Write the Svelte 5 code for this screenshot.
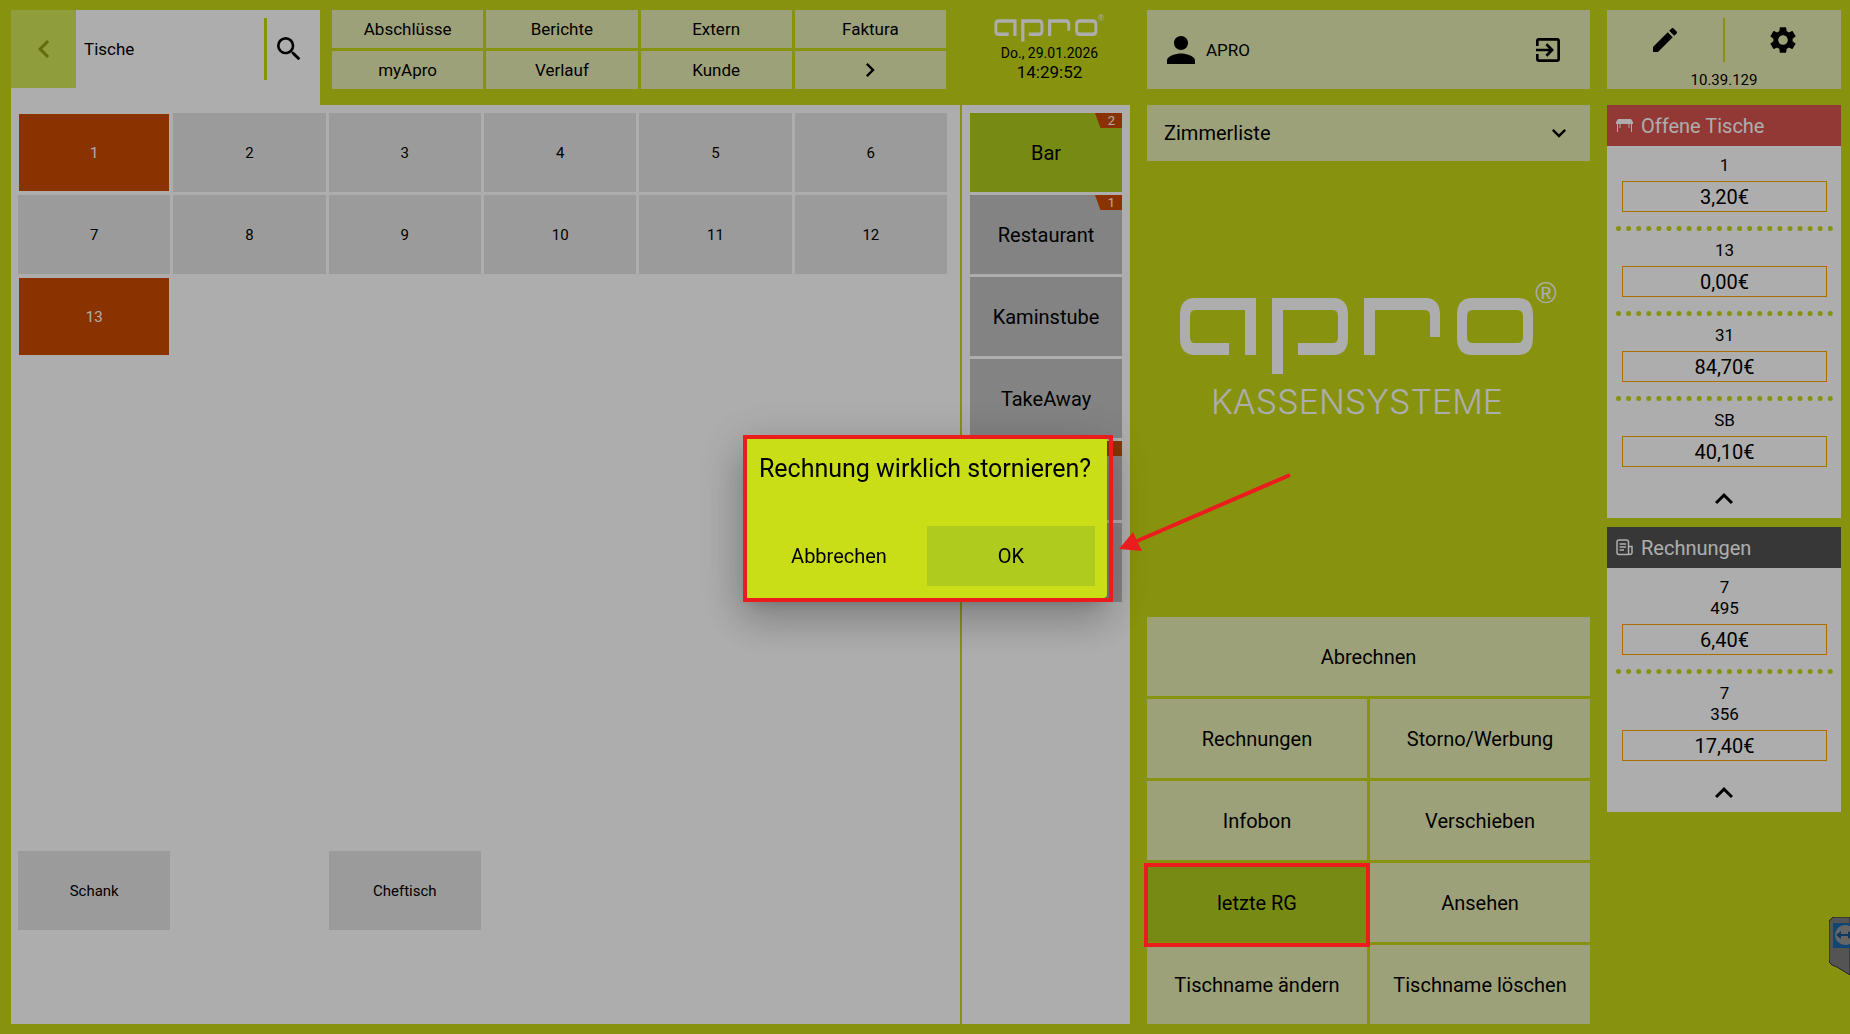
<script>
  const icons = {
    left: 'M15.41 7.41L14 6l-6 6 6 6 1.41-1.41L10.83 12z',
    right: 'M8.59 16.59L10 18l6-6-6-6-1.41 1.41L13.17 12z',
    down: 'M7.41 8.59L6 10l6 6 6-6-1.41-1.41L12 13.17z',
    up: 'M7.41 15.41L6 14l6-6 6 6-1.41 1.41L12 10.83z',
    search: 'M15.5 14h-.79l-.28-.27A6.47 6.47 0 0 0 16 9.5 6.5 6.5 0 1 0 9.5 16c1.61 0 3.09-.59 4.23-1.57l.27.28v.79l5 4.99L20.49 19l-4.99-5zm-6 0C7.01 14 5 11.99 5 9.5S7.01 5 9.5 5 14 7.01 14 9.5 11.99 14 9.5 14z',
    person: 'M12 12c2.21 0 4-1.79 4-4s-1.79-4-4-4-4 1.79-4 4 1.79 4 4 4zm0 2c-2.67 0-8 1.34-8 4v2h16v-2c0-2.66-5.33-4-8-4z',
    exit: 'M10.09 15.59L11.5 17l5-5-5-5-1.41 1.41L12.67 11H3v2h9.67l-2.58 2.59zM19 3H5c-1.11 0-2 .9-2 2v4h2V5h14v14H5v-4H3v4c0 1.1.89 2 2 2h14c1.1 0 2-.9 2-2V5c0-1.1-.9-2-2-2z',
    edit: 'M3 17.25V21h3.75L17.81 9.94l-3.75-3.75L3 17.25zM20.71 7.04c.39-.39.39-1.02 0-1.41l-2.34-2.34c-.39-.39-1.02-.39-1.41 0l-1.83 1.83 3.75 3.75 1.83-1.83z',
    settings: 'M19.14 12.94c.04-.3.06-.61.06-.94 0-.32-.02-.64-.07-.94l2.03-1.58c.18-.14.23-.41.12-.61l-1.92-3.32c-.12-.22-.37-.29-.59-.22l-2.39.96c-.5-.38-1.03-.7-1.62-.94l-.36-2.54c-.04-.24-.24-.41-.48-.41h-3.84c-.24 0-.43.17-.47.41l-.36 2.54c-.59.24-1.13.57-1.62.94l-2.39-.96c-.22-.08-.47 0-.59.22L2.74 8.87c-.12.21-.08.47.12.61l2.03 1.58c-.05.3-.09.63-.09.94s.02.64.07.94l-2.03 1.58c-.18.14-.23.41-.12.61l1.92 3.32c.12.22.37.29.59.22l2.39-.96c.5.38 1.03.7 1.62.94l.36 2.54c.05.24.24.41.48.41h3.84c.24 0 .44-.17.47-.41l.36-2.54c.59-.24 1.13-.56 1.62-.94l2.39.96c.22.08.47 0 .59-.22l1.92-3.32c.12-.22.07-.47-.12-.61l-2.01-1.58zM12 15.6c-1.98 0-3.6-1.62-3.6-3.6s1.62-3.6 3.6-3.6 3.6 1.62 3.6 3.6-1.62 3.6-3.6 3.6z'
  };

  const menu = ['Abschlüsse', 'Berichte', 'Extern', 'Faktura', 'myApro', 'Verlauf', 'Kunde'];

  // 6 columns, tables are numbered row by row
  const tables = [
    ...Array.from({ length: 13 }, (_, i) => ({
      name: String(i + 1),
      col: (i % 6) + 1,
      row: Math.floor(i / 6) + 1,
      open: i === 0 || i === 12
    })),
    { name: 'Schank', col: 1, row: 10 },
    { name: 'Cheftisch', col: 3, row: 10 }
  ];

  const areas = [
    { name: 'Bar', badge: '2' },
    { name: 'Restaurant', badge: '1' },
    { name: 'Kaminstube' },
    { name: 'TakeAway' },
    { name: '', badge: ' ' },
    { name: '' }
  ];

  const actions = [
    'Abrechnen', 'Rechnungen', 'Storno/Werbung', 'Infobon', 'Verschieben',
    'letzte RG', 'Ansehen', 'Tischname ändern', 'Tischname löschen'
  ];

  const openTables = [
    { lines: ['1'], sum: '3,20€' },
    { lines: ['13'], sum: '0,00€' },
    { lines: ['31'], sum: '84,70€' },
    { lines: ['SB'], sum: '40,10€' }
  ];

  const bills = [
    { lines: ['7', '495'], sum: '6,40€' },
    { lines: ['7', '356'], sum: '17,40€' }
  ];

  let search = $state('Tische');
  let area = $state(0);
  let action = $state('letzte RG');
  let confirm = $state(true);
</script>

{#snippet icon(name, size)}
  <svg class="icon" width={size} height={size} viewBox="0 0 24 24" aria-hidden="true"><path d={icons[name]} /></svg>
{/snippet}

{#snippet mark()}
  <path d="M76 18H15Q0 18 0 35V58Q0 75 15 75H49V63H15Q10 63 10 57V36Q10 30 15 30H65V75H76Z" />
  <path d="M92 18H153Q168 18 168 35V58Q168 75 153 75H118V63H153Q158 63 158 57V36Q158 30 153 30H103V94H92Z" />
  <path d="M184 18H245Q260 18 260 35V57H250V36Q250 30 245 30H195V75H184Z" />
  <path fill-rule="evenodd" d="M292 18H338Q353 18 353 35V58Q353 75 338 75H292Q277 75 277 58V35Q277 18 292 18ZM293 30Q287 30 287 36V57Q287 63 293 63H337Q343 63 343 57V36Q343 30 337 30Z" />
  <text class="reg" x="366" y="23" text-anchor="middle">®</text>
{/snippet}

{#snippet entries(list)}
  <ul>
    {#each list as entry}
      <li>
        {#each entry.lines as line}
          <div class="line">{line}</div>
        {/each}
        <button class="sum">{entry.sum}</button>
      </li>
    {/each}
  </ul>
  <button class="more" aria-label="Mehr">{@render icon('up', 36)}</button>
{/snippet}

<div class="page">
  <header class="top">
    <div class="search">
      <button class="back" aria-label="Zurück">{@render icon('left', 36)}</button>
      <input aria-label="Suche" bind:value={search} />
      <button class="find" aria-label="Suchen">{@render icon('search', 32)}</button>
    </div>
    <nav>
      {#each menu as item}
        <button>{item}</button>
      {/each}
      <button aria-label="Weiter">{@render icon('right', 28)}</button>
    </nav>
    <div class="clock">
      <svg class="logo" width="111" height="28" viewBox="0 0 378 96" role="img" aria-label="apro">{@render mark()}</svg>
      <span class="date">Do., 29.01.2026</span>
      <span class="time">14:29:52</span>
    </div>
  </header>

  <div class="user">
    {@render icon('person', 42)}
    <span>APRO</span>
    <button aria-label="Abmelden">{@render icon('exit', 32)}</button>
  </div>

  <div class="tools">
    <div class="tool-row">
      <button aria-label="Bearbeiten">{@render icon('edit', 32)}</button>
      <button aria-label="Einstellungen">{@render icon('settings', 32)}</button>
    </div>
    <span>10.39.129</span>
  </div>

  <main>
    <div class="tables">
      {#each tables as table}
        <button class="tile" class:open={table.open} style:grid-area="{table.row} / {table.col}">{table.name}</button>
      {/each}
    </div>
    <div class="areas">
      {#each areas as item, i}
        <button class:active={area === i} aria-label={item.name || `Bereich ${i + 1}`} onclick={() => (area = i)}>
          {item.name}
          {#if item.badge}<span class="badge">{item.badge}</span>{/if}
        </button>
      {/each}
    </div>
  </main>

  <section class="middle">
    <button class="rooms">Zimmerliste {@render icon('down', 28)}</button>
    <div class="brand">
      <svg class="logo" width="378" height="148" viewBox="0 0 378 148" role="img" aria-label="apro Kassensysteme">
        {@render mark()}
        <text class="claim" x="177" y="134" text-anchor="middle">KASSENSYSTEME</text>
      </svg>
    </div>
    <div class="actions">
      {#each actions as item}
        <button class:active={action === item} onclick={() => (action = item)}>{item}</button>
      {/each}
    </div>
  </section>

  <aside>
    <section class="panel">
      <h2 class="red">
        <svg width="17" height="14" viewBox="0 0 17 14" aria-hidden="true">
          <path d="M2 0H15L17 3V5H0V3ZM1 5H2V13H1ZM3.500 5H4.500V9H3.500ZM12.500 5H13.500V9H12.500ZM15 5H16V13H15Z" />
        </svg>
        Offene Tische
      </h2>
      {@render entries(openTables)}
    </section>
    <section class="panel">
      <h2 class="dark">
        <svg class="outline" width="17" height="17" viewBox="0 0 17 17" aria-hidden="true">
          <path d="M12.500 15.500H3Q1 15.500 1 13.500V3Q1 1 3 1H10.500Q12.500 1 12.500 3V14Q12.500 15.500 14 15.500T16 14V7.500H12.500M3.500 5H10M3.500 8H10M3.500 11H8" />
        </svg>
        Rechnungen
      </h2>
      {@render entries(bills)}
    </section>
  </aside>

  <svg class="remote" width="21" height="58" viewBox="0 0 21 58" aria-hidden="true">
    <path d="M21 0H4L0 4V43Q0 46 3 48L8 50L21 58Z" fill="#7d7d7d" stroke="#333" />
    <path d="M4 6H21V31H4Z" fill="#1a68a8" />
    <circle cx="16" cy="18" r="10" fill="#969696" />
    <path d="M7 18L12 14V17H19V14L24 18L19 22V19H12V22Z" fill="#1a558c" />
  </svg>
</div>

{#if confirm}
  <div class="backdrop">
    <div class="dialog" role="dialog" aria-labelledby="question">
      <h1 id="question">Rechnung wirklich stornieren?</h1>
      <div class="choices">
        <button onclick={() => (confirm = false)}>Abbrechen</button>
        <button class="ok" onclick={() => (confirm = false)}>OK</button>
      </div>
      <svg class="arrow" width="176" height="80" viewBox="0 0 176 80" aria-hidden="true">
        <path d="M171 3L18 69" stroke="#ea1c1e" stroke-width="4" />
        <path d="M0 77L14 60L23 79Z" fill="#ea1c1e" />
      </svg>
    </div>
  </div>
{/if}

<style>
  :global(body) {
    background: #c7d816;
  }
  .page, .backdrop {
    font-family: Roboto, "Liberation Sans", sans-serif;
    font-size: 17px;
    color: #000;
  }
  .page {
    position: relative;
    box-sizing: border-box;
    min-height: 100vh;
    display: grid;
    grid-template-columns: 1119fr 443fr 234fr;
    grid-template-rows: 79px 1fr;
    gap: 16px 17px;
    padding: 10px 9px 10px 11px;
  }
  button {
    border: 0;
    padding: 0;
    margin: 0;
    font: inherit;
    color: inherit;
    background: none;
    cursor: pointer;
  }
  .icon {
    display: block;
    fill: currentColor;
  }
  .logo {
    display: block;
    fill: #fff;
    overflow: visible;
  }
  .reg {
    font: 29px "Liberation Sans", sans-serif;
  }
  .claim {
    font: 300 34px Inter, "DejaVu Sans", sans-serif;
  }

  /* top bar */
  .top {
    display: flex;
    min-width: 0;
  }
  .search {
    box-sizing: border-box;
    width: 309px;
    flex: none;
    display: flex;
    align-items: flex-start;
    margin-bottom: -16px;
    background: #fff;
  }
  .back {
    flex: none;
    width: 65px;
    height: 78px;
    display: grid;
    place-items: center;
    background: #d5e75b;
    color: #8f9f10;
  }
  .search input {
    flex: 1;
    width: 0;
    min-width: 0;
    height: 62px;
    margin-top: 8px;
    padding: 0 8px;
    border: 0;
    border-right: 3px solid #c7d816;
    outline: none;
    font: inherit;
    background: none;
  }
  .find {
    flex: none;
    width: 53px;
    height: 78px;
    padding-left: 6px;
  }
  nav {
    flex: 1;
    display: grid;
    grid-template-columns: repeat(4, 1fr);
    grid-template-rows: 1fr 1fr;
    gap: 3px;
    margin-left: 12px;
  }
  nav button {
    display: grid;
    place-items: center;
    min-height: 0;
    background: #e8eeb3;
  }
  .clock {
    box-sizing: border-box;
    flex: none;
    width: 201px;
    margin-right: -17px;
    padding: 4px 0 0 6px;
    display: flex;
    flex-direction: column;
    align-items: center;
  }
  .date {
    font-size: 14px;
    line-height: 18px;
    margin-top: 2px;
  }
  .time {
    line-height: 20px;
  }
  .user {
    display: flex;
    align-items: center;
    padding: 0 26px 0 13px;
    background: #e8eeb3;
  }
  .user span {
    flex: 1;
    margin-left: 4px;
  }
  .tools {
    background: #e8eeb3;
    text-align: center;
    font-size: 15px;
    line-height: 20px;
  }
  .tool-row {
    display: flex;
    height: 44px;
    padding: 8px 0;
  }
  .tool-row button {
    flex: 1;
    display: grid;
    justify-content: center;
    align-content: center;
  }
  .tool-row button + button {
    border-left: 2px solid #c7d816;
  }

  /* tables and areas */
  main {
    display: flex;
    background: #fff;
  }
  .tables {
    flex: 1;
    display: grid;
    grid-template-columns: repeat(6, 1fr);
    grid-template-rows: repeat(11, 79px);
    gap: 3px;
    padding: 8px 13px 0 7px;
  }
  .tile {
    font-size: 15px;
    background: #e5e5e5;
  }
  .tile.open {
    border: 1px solid #fff;
    color: #fff;
    background: #cd4c00;
  }
  .areas {
    width: 152px;
    display: grid;
    grid-auto-rows: 79px;
    gap: 3px;
    padding: 8px 8px 0;
    border-left: 2px solid #c7d816;
  }
  .areas button {
    position: relative;
    font-size: 20px;
    background: #c1c1c1;
  }
  .areas .active {
    background: #b0cc1d;
  }
  .badge {
    position: absolute;
    top: 0;
    right: 0;
    width: 27px;
    height: 15px;
    box-sizing: border-box;
    padding-left: 6px;
    clip-path: polygon(0 0, 100% 0, 100% 100%, 20% 100%);
    font-size: 13px;
    line-height: 15px;
    color: #fff;
    background: #cd4c00;
  }

  /* actions */
  .middle {
    display: flex;
    flex-direction: column;
    font-size: 20px;
  }
  .rooms {
    height: 56px;
    display: flex;
    align-items: center;
    justify-content: space-between;
    padding: 0 17px;
    background: #e8eeb3;
  }
  .brand {
    flex: 1;
    display: flex;
    justify-content: center;
    padding-top: 119px;
  }
  .actions {
    display: grid;
    grid-template-columns: 1fr 1fr;
    grid-auto-rows: 79px;
    gap: 3px;
  }
  .actions button {
    background: #e8eeb3;
  }
  .actions button:first-child {
    grid-column: span 2;
  }
  .actions .active {
    position: relative;
    background: #b0cc1d;
  }
  .actions .active::after {
    content: "";
    position: absolute;
    inset: 0 -3px -5px -3px;
    z-index: 3;
    border: 4px solid #ea1c1e;
  }

  /* side panels */
  .panel {
    margin-bottom: 9px;
    background: #fff;
  }
  h2 {
    display: flex;
    align-items: center;
    gap: 8px;
    height: 41px;
    margin: 0;
    padding-left: 9px;
    font-size: 20px;
    font-weight: 400;
    color: #fff;
  }
  h2 svg {
    fill: #fff;
  }
  h2 .outline {
    fill: none;
    stroke: #fff;
    stroke-width: 1.5;
  }
  .red {
    background: #d7534e;
  }
  .dark {
    background: #525252;
  }
  ul {
    list-style: none;
    margin: 0;
    padding: 0 8px 0 9px;
  }
  li {
    padding-top: 9px;
    text-align: center;
  }
  li:not(:last-child) {
    padding-bottom: 14px;
    border-bottom: 5px dotted #c7d816;
  }
  .line {
    line-height: 21px;
  }
  .sum {
    display: block;
    width: calc(100% - 12px);
    height: 31px;
    margin: 5px 6px 0;
    border: 1px solid #ffa200;
    font-size: 20px;
  }
  .more {
    display: grid;
    place-items: center;
    width: 100%;
    height: 51px;
    padding-top: 13px;
  }
  .remote {
    position: absolute;
    top: 917px;
    right: 0;
  }

  /* confirm dialog */
  .backdrop {
    position: fixed;
    inset: 0;
    z-index: 2;
    display: grid;
    place-items: center;
    background: rgba(0, 0, 0, 0.32);
  }
  .dialog {
    position: relative;
    box-sizing: border-box;
    width: 364px;
    padding: 12px;
    border-radius: 4px;
    background: #c9de17;
    box-shadow: 0 11px 15px -7px rgba(0, 0, 0, 0.2), 0 24px 38px 3px rgba(0, 0, 0, 0.14), 0 9px 46px 8px rgba(0, 0, 0, 0.14);
  }
  .dialog::after {
    content: "";
    position: absolute;
    inset: -1px -6px -4px 0;
    border: 4px solid #ea1c1e;
    pointer-events: none;
  }
  h1 {
    margin: 0 0 37px;
    font-size: 25px;
    font-weight: 400;
    line-height: 41px;
    white-space: nowrap;
    text-align: center;
  }
  .choices {
    display: grid;
    grid-template-columns: 1fr 1fr;
    gap: 4px;
  }
  .choices button {
    height: 60px;
    font-size: 20px;
  }
  .choices .ok {
    background: #aecb1e;
  }
  .arrow {
    position: absolute;
    left: 100%;
    top: 36px;
    margin-left: 12px;
  }
</style>
